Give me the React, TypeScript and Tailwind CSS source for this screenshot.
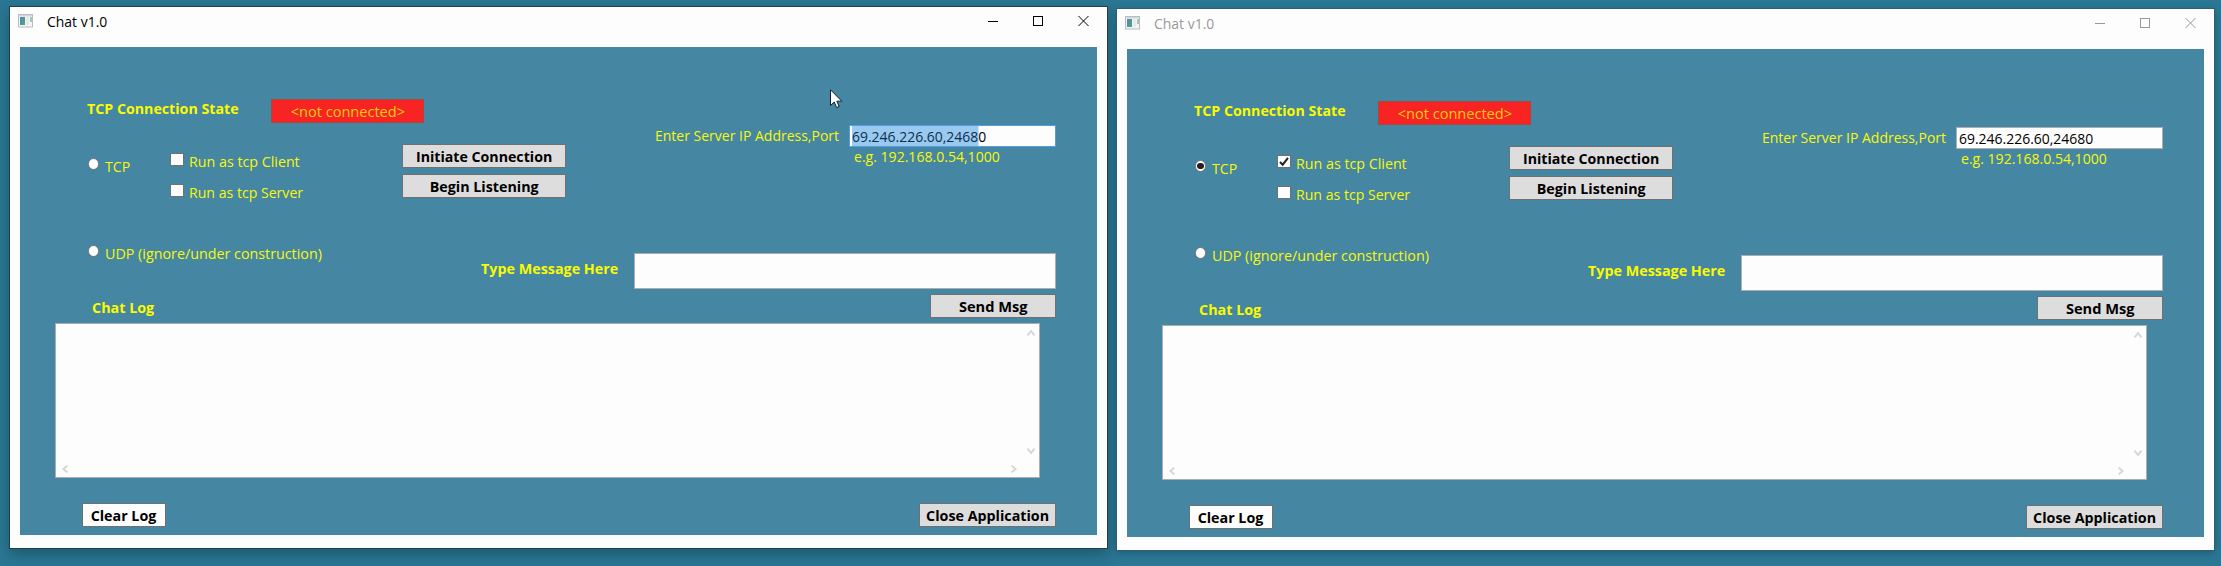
import type { ReactNode } from "react";
import clsx from "clsx";

type ChatWindowProps = {
  active: boolean;
  tcp: boolean;
  client: boolean;
};

/* Slightly condensed interface text. */
function Text({
  className = "origin-left scale-x-[0.947]",
  children,
}: {
  className?: string;
  children: ReactNode;
}) {
  return <span className={clsx("inline-block whitespace-nowrap", className)}>{children}</span>;
}

function Radio({ checked = false }: { checked?: boolean }) {
  return (
    <span className="mt-[2px] flex h-[12px] w-[11px] shrink-0 items-center justify-center rounded-full border border-[#707070] bg-[#fdfdfd]">
      {checked && <span className="h-[6px] w-[7px] rounded-full bg-[#212121]" />}
    </span>
  );
}

function Checkbox({ checked = false }: { checked?: boolean }) {
  return (
    <span className="mt-[2px] h-[13px] w-[14px] shrink-0 border border-[#707070] bg-[#fdfdfd]">
      {checked && (
        <svg viewBox="0 0 12 11" className="block h-[11px] w-[12px]">
          <path d="M2 6 L4.7 8.7 L10 1.8" fill="none" stroke="#212121" strokeWidth="2" />
        </svg>
      )}
    </span>
  );
}

function Button({
  className,
  textClassName = "scale-x-[0.952]",
  children,
}: {
  className?: string;
  textClassName?: string;
  children: ReactNode;
}) {
  return (
    <button
      className={clsx(
        "flex h-6 items-center justify-center border border-[#707070] font-bold text-black",
        className,
      )}
    >
      <Text className={textClassName}>{children}</Text>
    </button>
  );
}

function Chevron({ d }: { d: string }) {
  return (
    <svg viewBox="0 0 8 8" className="block size-2">
      <path d={d} fill="none" stroke="#d6d6d6" strokeWidth="1.9" />
    </svg>
  );
}

function AppIcon() {
  return (
    <svg viewBox="0 0 15 14" className="mt-[7px] h-[14px] w-[15px]">
      <defs>
        <linearGradient id="pane" x1="0" y1="0" x2="1" y2="1">
          <stop offset="0" stopColor="#4f86b8" />
          <stop offset="1" stopColor="#4fa77a" />
        </linearGradient>
      </defs>
      <rect x="0.5" y="0.5" width="14" height="12.5" fill="#f4f4f4" stroke="#b9bdc2" />
      <rect x="1" y="1" width="13" height="1.5" fill="#d3d7db" />
      <rect x="2" y="3" width="5" height="8" fill="url(#pane)" />
      <rect x="8" y="3" width="3" height="8" fill="#e6eaec" />
      <rect x="12" y="3" width="2" height="5" fill="#9cc9c0" />
    </svg>
  );
}

function TitleBar({ active }: { active: boolean }) {
  return (
    <header
      className={clsx(
        "flex h-10 items-start pl-2",
        active ? "text-black" : "text-[#999999]",
      )}
    >
      <AppIcon />
      <div className="mt-1 ml-[14px] grow">
        <Text className="origin-left scale-x-[0.93]">Chat v1.0</Text>
      </div>
      <svg viewBox="0 0 102 11" className="mt-[9px] mr-[18px] h-[11px] w-[102px]" fill="none" stroke="currentColor">
        <path d="M1 5.5 H11" />
        <rect x="46.5" y="0.5" width="9" height="9" />
        <path d="M91.5 0 L101.5 10 M101.5 0 L91.5 10" />
      </svg>
    </header>
  );
}

function ChatWindow({ active, tcp, client }: ChatWindowProps) {
  return (
    <section
      className={clsx(
        "h-[541px] w-[1097px] bg-[#fdfdfd]",
        active
          ? "mt-[7px] shadow-[0_0_0_1px_#213f4e,0_5px_13px_1px_rgba(10,50,60,0.45)]"
          : "mt-[9px] shadow-[0_0_0_1px_#2d5e73,0_2px_8px_0px_rgba(10,50,60,0.45)]",
      )}
    >
      <TitleBar active={active} />
      <main className="mx-[10px] h-[488px] bg-[#4586a3] text-[#f8f808]">
        <div className="flex h-[196px]">
          <div className="w-[546px]">
            <div className="flex pt-[51px] pl-[67px]">
              <div className="w-[184px] font-bold text-[#fafa00]">
                <Text>TCP Connection State</Text>
              </div>
              <div className="mt-px flex h-6 w-[153px] items-center justify-center border border-[#a04a42] bg-[#f82424] text-[#f8cc10]">
                <Text className="scale-x-[0.97]">&lt;not connected&gt;</Text>
              </div>
            </div>
            <div className="mt-[21px] grid grid-cols-[150px_232px_164px]">
              <label className="mt-3 flex gap-[6px] self-start pl-[68px]">
                <Radio checked={tcp} />
                <Text className="origin-left scale-x-[0.94]">TCP</Text>
              </label>
              <div className="mt-[7px] flex flex-col gap-[11px]">
                <label className="flex gap-[5px]">
                  <Checkbox checked={client} />
                  <Text className="origin-left scale-x-[0.95]">Run as tcp Client</Text>
                </label>
                <label className="flex gap-[5px]">
                  <Checkbox />
                  <Text className="origin-left scale-x-[0.94]">Run as tcp Server</Text>
                </label>
              </div>
              <div className="flex flex-col gap-[6px]">
                <Button className="bg-[#dddddd]" textClassName="scale-x-[0.945]">
                  Initiate Connection
                </Button>
                <Button className="bg-[#dddddd]">Begin Listening</Button>
              </div>
            </div>
          </div>
          <div className="flex grow items-start pt-[78px] pl-[89px]">
            <div className="w-[194px]">
              <Text className="origin-left scale-x-[0.933]">Enter Server IP Address,Port</Text>
            </div>
            <div>
              <div
                className={clsx(
                  "h-[22px] w-[207px] border bg-[#fdfdfd] pl-[2px] text-black",
                  active ? "border-[#569de5]" : "border-[#abadb3]",
                )}
              >
                <Text className="origin-left scale-x-[0.93]">
                  {active ? (
                    <>
                      <span className="inline-block bg-[#99c9ef] text-[#0b2f4e]">69.246.226.60,2468</span>0
                    </>
                  ) : (
                    "69.246.226.60,24680"
                  )}
                </Text>
              </div>
              <div className="-mt-px pl-[5px]">
                <Text className="origin-left scale-x-[0.937]">e.g. 192.168.0.54,1000</Text>
              </div>
            </div>
          </div>
        </div>
        <div className="flex h-[51px] items-start">
          <label className="flex w-[461px] gap-[6px] pl-[68px]">
            <Radio />
            <Text className="origin-left scale-x-[0.953]">UDP (ignore/under construction)</Text>
          </label>
          <div className="mt-[15px] w-[153px] font-bold text-[#fafa00]">
            <Text className="origin-left scale-x-[0.955]">Type Message Here</Text>
          </div>
          <div className="mt-[10px] h-9 w-[422px] border border-[#abadb3] bg-[#fdfdfd]" />
        </div>
        <div className="flex h-[29px] items-start justify-between pr-[41px] pl-[72px]">
          <div className="mt-[3px] font-bold text-[#fafa00]">
            <Text className="origin-left scale-x-[0.955]">Chat Log</Text>
          </div>
          <Button className="w-[126px] bg-[#dddddd]" textClassName="scale-x-[0.975]">
            Send Msg
          </Button>
        </div>
        <div className="ml-[35px] flex h-[155px] w-[985px] flex-col border border-[#abadb3] bg-[#fdfdfd]">
          <div className="flex grow flex-col items-end justify-between pt-[5px] pr-[4px] pb-[5px]">
            <Chevron d="M0.6 6.4 L4 2 L7.4 6.4" />
            <Chevron d="M0.6 1.6 L4 6 L7.4 1.6" />
          </div>
          <div className="flex h-[17px] items-center justify-between pr-[21px] pl-[5px]">
            <Chevron d="M6.4 0.6 L2.4 4 L6.4 7.4" />
            <Chevron d="M1.6 0.6 L5.6 4 L1.6 7.4" />
          </div>
        </div>
        <div className="mt-[25px] flex justify-between pr-[41px] pl-[62px]">
          <Button className="w-[84px] bg-[#fdfdfd]">Clear Log</Button>
          <Button className="w-[137px] bg-[#dddddd]">Close Application</Button>
        </div>
      </main>
    </section>
  );
}

export default function App() {
  return (
    <div className="relative flex h-[566px] w-[2221px] items-start gap-[10px] overflow-hidden bg-[#2b7794] pl-[10px] font-['Open_Sans',sans-serif] text-[15px] leading-5">
      <ChatWindow active tcp={false} client={false} />
      <ChatWindow active={false} tcp client />
      <svg viewBox="0 0 13 20" className="absolute top-[89px] left-[830px] h-[20px] w-[13px]">
        <path
          d="M0.5 0.8 V16.5 L4.2 13 L6.7 18.6 L9.2 17.5 L6.8 12.2 H11.8 Z"
          fill="#ffffff"
          stroke="#10202c"
        />
      </svg>
    </div>
  );
}
